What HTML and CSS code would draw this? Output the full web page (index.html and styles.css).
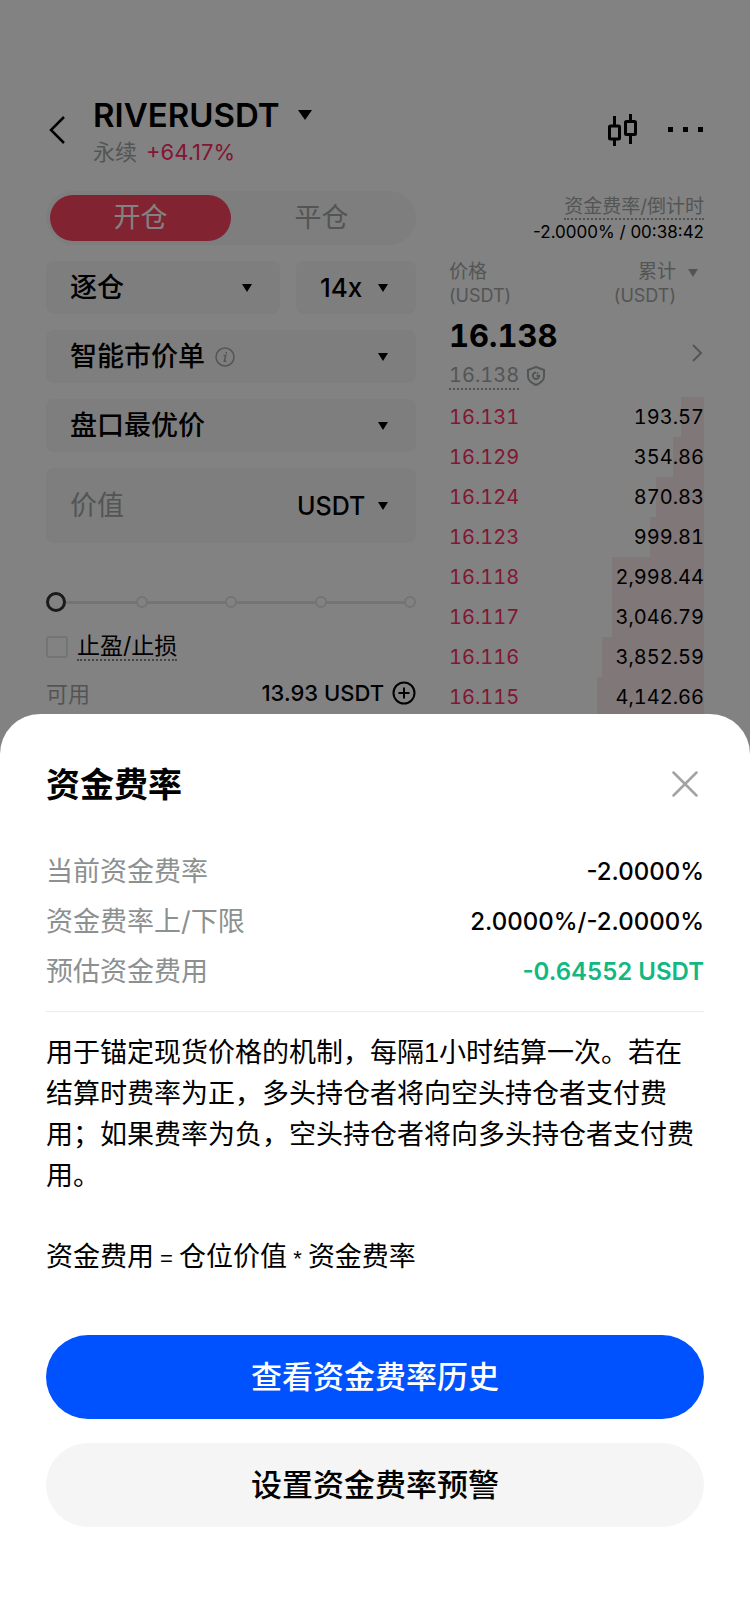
FILE: index.html
```html
<!DOCTYPE html>
<html lang="zh-CN">
<head>
<meta charset="utf-8">
<meta name="viewport" content="width=device-width, initial-scale=1">
<title>RIVERUSDT 永续</title>
<link rel="stylesheet" href="styles.css">
</head>
<body>
<div class="app">
  <header class="header">
    <button class="icon-btn back" aria-label="返回">
      <svg width="18" height="30" viewBox="0 0 18 30" fill="none" stroke="currentColor" stroke-width="2.500"><path d="M16 2 3 15l13 13"/></svg>
    </button>
    <div class="pair">
      <button class="pair-name">RIVERUSDT
        <svg width="14" height="10" viewBox="0 0 14 10" fill="currentColor"><path d="M0 0h14L7 10z"/></svg>
      </button>
      <p class="pair-sub"><span>永续</span><span class="down">+64.17%</span></p>
    </div>
    <button class="icon-btn" aria-label="K线">
      <svg width="30" height="32" viewBox="0 0 30 32" fill="none" stroke="currentColor" stroke-width="3"><path d="M6.500 2v9M6.500 26v6M22.500 0v6M22.500 21v9"/><rect x="1.500" y="12" width="10" height="13" rx="1"/><rect x="17.500" y="7.500" width="10" height="13" rx="1"/></svg>
    </button>
    <button class="icon-btn more" aria-label="更多">
      <svg width="36" height="6" viewBox="0 0 36 6" fill="currentColor"><rect width="5" height="5"/><rect x="15" width="5" height="5"/><rect x="30" width="5" height="5"/></svg>
    </button>
  </header>

  <main class="trade">
    <form class="order">
      <div class="tabs">
        <button type="button" class="tab active">开仓</button>
        <button type="button" class="tab">平仓</button>
      </div>
      <div class="pair-fields">
        <div class="field grow">
          <select aria-label="保证金模式"><option>逐仓</option></select>
          <svg class="caret" width="10" height="8" viewBox="0 0 10 8"><path d="M0 0h10L5 8z"/></svg>
        </div>
        <div class="field lever">
          <select aria-label="杠杆"><option>14x</option></select>
          <svg class="caret" width="10" height="8" viewBox="0 0 10 8"><path d="M0 0h10L5 8z"/></svg>
        </div>
      </div>
      <div class="field">
        <select aria-label="订单类型"><option>智能市价单</option></select>
        <svg class="info" width="20" height="20" viewBox="0 0 20 20" fill="none" stroke="currentColor" stroke-width="1.500"><circle cx="10" cy="10" r="9"/><path d="M8.500 8.500h2.200L9.300 14.200h2M11.300 5v1.800"/></svg>
        <svg class="caret" width="10" height="8" viewBox="0 0 10 8"><path d="M0 0h10L5 8z"/></svg>
      </div>
      <div class="field">
        <select aria-label="价格类型"><option>盘口最优价</option></select>
        <svg class="caret" width="10" height="8" viewBox="0 0 10 8"><path d="M0 0h10L5 8z"/></svg>
      </div>
      <div class="field tall">
        <input class="amount" type="text" placeholder="价值" aria-label="价值">
        <select class="unit" aria-label="单位"><option>USDT</option></select>
        <svg class="caret" width="10" height="8" viewBox="0 0 10 8"><path d="M0 0h10L5 8z"/></svg>
      </div>
      <div class="slider">
        <div class="ticks"><i></i><i></i><i></i><i></i><i></i></div>
        <input type="range" min="0" max="100" value="0" aria-label="仓位比例">
      </div>
      <label class="tpsl"><input type="checkbox"><span>止盈/止损</span></label>
      <div class="avail">
        <span class="muted">可用</span>
        <span class="avail-value">13.93 USDT</span>
        <button type="button" class="icon-btn" aria-label="充值">
          <svg width="24" height="24" viewBox="0 0 24 24" fill="none" stroke="currentColor" stroke-width="2"><circle cx="12" cy="12" r="10.500"/><path d="M12 6.500v11M6.500 12h11"/></svg>
        </button>
      </div>
    </form>

    <section class="book">
      <div class="funding">
        <button class="funding-label">资金费率/倒计时</button>
        <p class="funding-value">-2.0000% / 00:38:42</p>
      </div>
      <div class="book-head">
        <p>价格<br><span>(USDT)</span></p>
        <p class="sum">累计<br><span>(USDT)</span></p>
        <svg class="caret" width="10" height="8" viewBox="0 0 10 8"><path d="M0 0h10L5 8z"/></svg>
      </div>
      <div class="last">
        <div>
          <p class="last-price">16.138</p>
          <p class="mark"><span>16.138</span>
            <svg width="18" height="20" viewBox="0 0 18 20" fill="none" stroke="currentColor" stroke-width="2"><path d="M9 1 17 4v6.500c0 4-3.500 6.500-8 8.500-4.500-2-8-4.500-8-8.500V4z"/><path d="M9 6.500a3.200 3.200 0 1 0 3.200 3.200H9.500M11 7.500l-1-1"/></svg>
          </p>
        </div>
        <svg class="go" width="12" height="20" viewBox="0 0 12 20" fill="none" stroke="currentColor" stroke-width="2"><path d="M2 2l8 8-8 8"/></svg>
      </div>
      <table class="orders">
        <tbody>
          <tr><td class="down">16.131</td><td><i class="depth" style="width:9%"></i><span>193.57</span></td></tr>
          <tr><td class="down">16.129</td><td><i class="depth" style="width:12%"></i><span>354.86</span></td></tr>
          <tr><td class="down">16.124</td><td><i class="depth" style="width:19%"></i><span>870.83</span></td></tr>
          <tr><td class="down">16.123</td><td><i class="depth" style="width:21%"></i><span>999.81</span></td></tr>
          <tr><td class="down">16.118</td><td><i class="depth" style="width:36%"></i><span>2,998.44</span></td></tr>
          <tr><td class="down">16.117</td><td><i class="depth" style="width:36%"></i><span>3,046.79</span></td></tr>
          <tr><td class="down">16.116</td><td><i class="depth" style="width:40%"></i><span>3,852.59</span></td></tr>
          <tr><td class="down">16.115</td><td><i class="depth" style="width:42%"></i><span>4,142.66</span></td></tr>
        </tbody>
      </table>
    </section>
  </main>
</div>

<div class="scrim">
  <section class="sheet" role="dialog" aria-modal="true" aria-labelledby="sheet-title">
    <div class="sheet-head">
      <h2 id="sheet-title">资金费率</h2>
      <button class="icon-btn close" aria-label="关闭">
        <svg width="26" height="26" viewBox="0 0 26 26" fill="none" stroke="currentColor" stroke-width="2.500" stroke-linecap="round"><path d="M1.500 1.500l23 23M24.500 1.500l-23 23"/></svg>
      </button>
    </div>
    <dl class="rates">
      <div><dt>当前资金费率</dt><dd>-2.0000%</dd></div>
      <div><dt>资金费率上/下限</dt><dd>2.0000%/-2.0000%</dd></div>
      <div><dt>预估资金费用</dt><dd class="up">-0.64552 USDT</dd></div>
    </dl>
    <div class="explain">
      <p>用于锚定现货价格的机制，每隔1小时结算一次。若在结算时费率为正，多头持仓者将向空头持仓者支付费用；如果费率为负，空头持仓者将向多头持仓者支付费用。</p>
      <p>资金费用<span class="op"> = </span>仓位价值<span class="op"> * </span>资金费率</p>
    </div>
    <div class="actions">
      <button class="btn primary">查看资金费率历史</button>
      <button class="btn">设置资金费率预警</button>
    </div>
  </section>
</div>
</body>
</html>
```
FILE: styles.css
```css
* { box-sizing: border-box; }

body {
  margin: 0;
  min-height: 100vh;
  background: #fff;
  color: #000;
  font-family: Inter, "Noto Sans CJK SC", sans-serif;
  font-size: 22px;
}

p, h2, dl, dd { margin: 0; }

button, input, select {
  margin: 0;
  padding: 0;
  border: 0;
  background: none;
  color: inherit;
  font: inherit;
}

select { appearance: none; }
svg { display: block; flex: none; }

.app { padding: 94px 46px 0; }
.icon-btn { display: flex; align-items: center; }
.down { color: #ff2e66; }
.muted { color: #a4a8a8; }
.caret { fill: currentColor; }

/* Header */
.header { display: flex; align-items: center; height: 72px; }
.back { width: 47px; padding-left: 2px; }
.pair { flex: 1; padding-top: 2px; }
.pair-name {
  display: flex;
  align-items: center;
  gap: 18px;
  font-size: 33px;
  font-weight: 600;
  line-height: 42px;
}
.pair-sub { display: flex; gap: 9px; line-height: 32px; font-size: 22px; }
.pair-sub span:first-child { color: #a4a8a8; }
.more { margin-left: 30px; }

/* Trading area */
.trade {
  display: grid;
  grid-template-columns: 370fr 255fr;
  gap: 33px;
  margin-top: 25px;
}

.order { display: flex; flex-direction: column; gap: 16px; min-width: 0; }

.tabs {
  display: flex;
  height: 54px;
  padding: 4px;
  border-radius: 27px;
  background: #f7f7f7;
}
.tab { flex: 1; border-radius: 23px; color: #a4a8a8; font-size: 27px; line-height: 44px; }
.tab.active { background: #ff4560; color: #fff; }

.pair-fields { display: flex; gap: 16px; }
.field {
  display: flex;
  align-items: center;
  height: 53px;
  padding: 0 28px 0 24px;
  border-radius: 8px;
  background: #f7f7f7;
  font-size: 27px;
  font-weight: 500;
}
.field .caret { margin-left: auto; }
.grow { flex: 1; }
.lever { width: 120px; font-size: 26px; }
.info { margin-left: 10px; color: #a4a8a8; }
.tall { height: 75px; }
.amount { flex: 1; min-width: 0; font-weight: 400; }
.amount::placeholder { color: #a4a8a8; opacity: 1; }
.unit { font-size: 25px; }
.tall .caret { margin-left: 12px; }

.slider { display: grid; align-items: center; height: 20px; margin-top: 33px; }
.slider > * { grid-area: 1 / 1; }
.ticks {
  display: flex;
  justify-content: space-between;
  background: linear-gradient(#e4e4e4, #e4e4e4) center / calc(100% - 12px) 3px no-repeat;
}
.ticks i { width: 12px; height: 12px; border: 2px solid #e4e4e4; border-radius: 50%; background: #fff; }
.slider input { appearance: none; width: 100%; height: 20px; z-index: 1; }
.slider input::-webkit-slider-thumb {
  appearance: none;
  width: 20px;
  height: 20px;
  border: 3px solid #333;
  border-radius: 50%;
  background: #fff;
}

.tpsl { display: flex; align-items: center; gap: 9px; height: 32px; margin-top: 3px; font-size: 23px; }
.tpsl input {
  appearance: none;
  width: 22px;
  height: 22px;
  border: 2px solid #e4e4e4;
  border-radius: 3px;
}
.tpsl span { border-bottom: 2px dotted #888; line-height: 26px; }

.avail { display: flex; align-items: center; height: 32px; margin-top: -2px; }
.avail .muted { padding-bottom: 3px; }
.avail-value { margin-left: auto; margin-right: 8px; font-weight: 500; }

/* Order book */
.book { min-width: 0; font-size: 20px; }
.funding { padding-top: 3px; text-align: right; }
.funding-label {
  border-bottom: 2px dotted #a4a8a8;
  color: #a4a8a8;
  font-size: 19px;
  line-height: 22px;
}
.funding-value { font-size: 17px; line-height: 24px; }
.book-head {
  display: flex;
  margin-top: 16px;
  color: #a4a8a8;
  font-size: 19px;
  line-height: 24px;
}
.book-head span { font-size: 18px; }
.sum { margin-left: auto; text-align: right; }
.book-head .caret { margin: 9px 6px 0 12px; }
.last,
.orders { font-variant-numeric: tabular-nums; }
.last { display: flex; align-items: center; justify-content: space-between; margin-top: 8px; }
.last-price { font-size: 31px; font-weight: 700; line-height: 40px; }
.mark { display: flex; align-items: center; gap: 8px; margin-top: 6px; color: #a4a8a8; }
.mark span { border-bottom: 2px dotted #a4a8a8; line-height: 26px; }
.go { margin-right: 1px; color: #a4a8a8; }
.orders { width: 100%; margin-top: 7px; border-collapse: collapse; }
.orders tr { position: relative; height: 40px; }
.orders td { padding: 0; }
.orders td + td { text-align: right; }
.orders span { position: relative; }
.depth { position: absolute; inset: 0 0 0 auto; background: #fbeaec; }

/* Funding sheet */
.scrim {
  position: fixed;
  inset: 0;
  z-index: 2;
  display: flex;
  flex-direction: column;
  justify-content: flex-end;
  background: rgba(0, 0, 0, 0.49);
}
.sheet { padding: 46px 46px 97px; border-radius: 40px 40px 0 0; background: #fff; }
.sheet-head { display: flex; align-items: center; justify-content: space-between; height: 48px; }
.sheet-head h2 { padding-bottom: 4px; font-size: 34px; font-weight: 700; }
.close { margin-right: 6px; color: #a2a2a2; }
.rates { margin-top: 38px; padding-bottom: 15px; border-bottom: 1px solid #ececec; font-size: 27px; }
.rates div { display: flex; align-items: center; justify-content: space-between; height: 50px; }
.rates dt { padding-bottom: 4px; color: #8c9090; }
.rates dd { font-size: 24px; font-weight: 500; }
.rates .up { color: #12b881; font-weight: 600; }
.explain {
  margin-top: 21px;
  font-family: "Liberation Sans", "Noto Sans CJK SC", sans-serif;
  font-size: 27px;
  line-height: 41px;
}
.explain p + p { margin-top: 40px; }
.op { font-size: 22px; }
.actions { display: flex; flex-direction: column; gap: 24px; margin-top: 56px; }
.btn {
  height: 84px;
  padding-bottom: 6px;
  border-radius: 42px;
  background: #f5f5f5;
  font-size: 31px;
  font-weight: 500;
}
.primary { background: #0052ff; color: #fff; }
```
